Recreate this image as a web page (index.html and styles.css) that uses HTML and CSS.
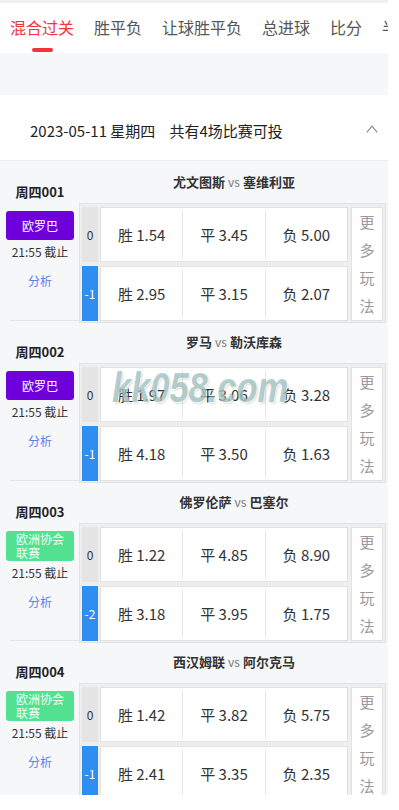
FILE: index.html
```html
<!DOCTYPE html>
<html>
<head lang="zh-CN">
	<meta charset="UTF-8">
	<title>混合过关</title>
	<link rel="stylesheet" href="styles.css">
</head>
<body>
<div class="page">
	<div class="topline"></div>
	<nav class="tabs">
		<div class="tab active"><span>混合过关</span><i class="bar"></i></div>
		<div class="tab"><span>胜平负</span></div>
		<div class="tab"><span>让球胜平负</span></div>
		<div class="tab"><span>总进球</span></div>
		<div class="tab"><span>比分</span></div>
		<div class="tab"><span>半全场</span></div>
	</nav>
	<div class="gap"></div>
	<div class="date-bar">
		<span>2023-05-11 星期四</span>
		<span class="count">共有4场比赛可投</span>
		<svg class="caret" width="12" height="8" viewBox="0 0 12 8"><path d="M0.8 7.4 L6 1.2 L11.2 7.4" fill="none" stroke="#8a8f99" stroke-width="1.2"/></svg>
	</div>

	<div class="match">
		<div class="m-left">
			<div class="m-no">周四001</div>
			<div class="league purple"><span>欧罗巴</span></div>
			<div class="m-time">21:55 截止</div>
			<div class="m-link">分析</div>
			<div class="m-sep"></div>
		</div>
		<div class="m-right">
			<div class="m-title">尤文图斯 <span class="vs">vs</span> 塞维利亚</div>
			<div class="odds">
				<div class="rows">
					<div class="row">
						<div class="hc">0</div>
						<div class="cells"><div class="cell">胜 1.54</div><div class="cell">平 3.45</div><div class="cell">负 5.00</div></div>
					</div>
					<div class="row">
						<div class="hc neg">-1</div>
						<div class="cells"><div class="cell">胜 2.95</div><div class="cell">平 3.15</div><div class="cell">负 2.07</div></div>
					</div>
				</div>
				<div class="more">更<br>多<br>玩<br>法</div>
			</div>
		</div>
	</div>

	<div class="match">
		<div class="m-left">
			<div class="m-no">周四002</div>
			<div class="league purple"><span>欧罗巴</span></div>
			<div class="m-time">21:55 截止</div>
			<div class="m-link">分析</div>
			<div class="m-sep"></div>
		</div>
		<div class="m-right">
			<div class="m-title">罗马 <span class="vs">vs</span> 勒沃库森</div>
			<div class="odds">
				<div class="rows">
					<div class="row">
						<div class="hc">0</div>
						<div class="cells"><div class="cell">胜 1.97</div><div class="cell">平 3.06</div><div class="cell">负 3.28</div></div>
					</div>
					<div class="row">
						<div class="hc neg">-1</div>
						<div class="cells"><div class="cell">胜 4.18</div><div class="cell">平 3.50</div><div class="cell">负 1.63</div></div>
					</div>
				</div>
				<div class="more">更<br>多<br>玩<br>法</div>
			</div>
		</div>
	</div>

	<div class="match">
		<div class="m-left">
			<div class="m-no">周四003</div>
			<div class="league green"><span>欧洲协会联赛</span></div>
			<div class="m-time">21:55 截止</div>
			<div class="m-link">分析</div>
			<div class="m-sep"></div>
		</div>
		<div class="m-right">
			<div class="m-title">佛罗伦萨 <span class="vs">vs</span> 巴塞尔</div>
			<div class="odds">
				<div class="rows">
					<div class="row">
						<div class="hc">0</div>
						<div class="cells"><div class="cell">胜 1.22</div><div class="cell">平 4.85</div><div class="cell">负 8.90</div></div>
					</div>
					<div class="row">
						<div class="hc neg">-2</div>
						<div class="cells"><div class="cell">胜 3.18</div><div class="cell">平 3.95</div><div class="cell">负 1.75</div></div>
					</div>
				</div>
				<div class="more">更<br>多<br>玩<br>法</div>
			</div>
		</div>
	</div>

	<div class="match">
		<div class="m-left">
			<div class="m-no">周四004</div>
			<div class="league green"><span>欧洲协会联赛</span></div>
			<div class="m-time">21:55 截止</div>
			<div class="m-link">分析</div>
			<div class="m-sep"></div>
		</div>
		<div class="m-right">
			<div class="m-title">西汉姆联 <span class="vs">vs</span> 阿尔克马</div>
			<div class="odds">
				<div class="rows">
					<div class="row">
						<div class="hc">0</div>
						<div class="cells"><div class="cell">胜 1.42</div><div class="cell">平 3.82</div><div class="cell">负 5.75</div></div>
					</div>
					<div class="row">
						<div class="hc neg">-1</div>
						<div class="cells"><div class="cell">胜 2.41</div><div class="cell">平 3.35</div><div class="cell">负 2.35</div></div>
					</div>
				</div>
				<div class="more">更<br>多<br>玩<br>法</div>
			</div>
		</div>
	</div>

	<div class="watermark">kk058.com</div>
</div>
</body>
</html>
```

FILE: styles.css
```css
* {
	box-sizing: border-box;
	margin: 0;
	padding: 0;
}

body {
	background: #fff;
	font-family: "Noto Sans CJK SC", "Noto Sans", sans-serif;
	color: #333;
}

.page {
	position: relative;
	width: 388px;
	height: 795px;
	overflow: hidden;
	background: #f6f7f9;
}

.topline {
	height: 3px;
	background: #eeeff1;
}

/* tabs */
.tabs {
	display: flex;
	height: 50px;
	background: #fff;
	white-space: nowrap;
	overflow: hidden;
}

.tab {
	display: flex;
	flex-direction: column;
	align-items: center;
	flex-shrink: 0;
	padding: 13px 10px 0;
	font-size: 16px;
	line-height: 22px;
	color: #555;
}

.tab.active {
	color: #f2323f;
}

.tab .bar {
	display: block;
	width: 21px;
	height: 4px;
	margin-top: 10px;
	border-radius: 2px;
	background: #f2323f;
}

.gap {
	height: 42px;
}

/* date */
.date-bar {
	display: flex;
	align-items: center;
	height: 66px;
	padding: 5px 10px 0 30px;
	background: #fff;
	border-bottom: 1px solid #ebebeb;
	font-size: 15px;
	color: #222;
}

.date-bar .count {
	margin-left: 14px;
}

.date-bar .caret {
	margin-left: auto;
	margin-top: -3px;
}

/* match */
.match {
	display: flex;
	height: 160px;
}

.m-left {
	display: flex;
	flex-direction: column;
	align-items: center;
	width: 80px;
	flex-shrink: 0;
}

.m-no {
	margin-top: 23px;
	font-size: 13px;
	font-weight: bold;
	line-height: 16px;
	color: #222;
}

.league {
	display: flex;
	align-items: center;
	justify-content: center;
	width: 68px;
	height: 29px;
	margin-top: 11px;
	padding: 0 10px;
	border-radius: 3px;
	font-size: 12px;
	line-height: 14px;
	color: #fff;
}

.league.purple {
	background: #6e00da;
}

.league.green {
	height: 30px;
	background: #52e190;
	color: #f4fff7;
}

.m-time {
	margin-top: 4px;
	font-size: 12px;
	line-height: 16px;
	color: #333;
}

.m-link {
	margin-top: 13px;
	font-size: 12px;
	line-height: 16px;
	color: #5a7ef2;
}

.m-sep {
	align-self: stretch;
	height: 1px;
	margin-top: auto;
	margin-left: 10px;
	background: #e4e4e6;
}

.m-right {
	display: flex;
	flex-direction: column;
	flex: 1;
}

.m-title {
	flex-shrink: 0;
	height: 42px;
	line-height: 42px;
	text-align: center;
	font-size: 13px;
	font-weight: bold;
	color: #333;
}

.m-title .vs {
	font-size: 12px;
	font-weight: normal;
	color: #777;
}

/* odds table */
.odds {
	display: flex;
	flex-shrink: 0;
	height: 120px;
	margin: 0 2px 0 -1px;
	padding: 3px 2px 1px;
	border: 1px solid #e2e2e4;
	background: #eeeeef;
}

.rows {
	flex: 1;
}

.row {
	display: flex;
	height: 55px;
}

.row + .row {
	margin-top: 4px;
}

.hc {
	display: flex;
	align-items: center;
	justify-content: center;
	width: 16px;
	background: #e4e4e4;
	font-size: 12px;
	color: #333;
}

.hc.neg {
	background: #2f8ef2;
	color: #fff;
}

.cells {
	display: flex;
	flex: 1;
	margin-left: 2px;
	padding: 2px 0;
	background: #fff;
	border: 1px solid #e2e2e2;
}

.cell {
	display: flex;
	flex: 1;
	align-items: center;
	justify-content: center;
	font-size: 15px;
	color: #333;
}

.cell + .cell {
	border-left: 1px solid #e6e6e6;
}

.more {
	display: flex;
	flex-direction: column;
	align-items: center;
	justify-content: center;
	width: 32px;
	margin-left: 3px;
	background: #fff;
	border: 1px solid #e2e2e2;
	font-size: 15px;
	line-height: 28px;
	color: #9a9a9a;
	text-align: center;
}

/* watermark over the list */
.watermark {
	position: absolute;
	left: 112px;
	top: 367px;
	font-family: "Liberation Sans", sans-serif;
	font-size: 42px;
	font-style: italic;
	font-weight: bold;
	line-height: 1;
	color: rgba(110, 160, 160, 0.5);
	text-shadow: 1px 1px 0 rgba(255, 255, 255, 0.6), 2px 2px 2px rgba(0, 0, 0, 0.12);
	transform: scaleX(0.82);
	transform-origin: left top;
	pointer-events: none;
}
```
